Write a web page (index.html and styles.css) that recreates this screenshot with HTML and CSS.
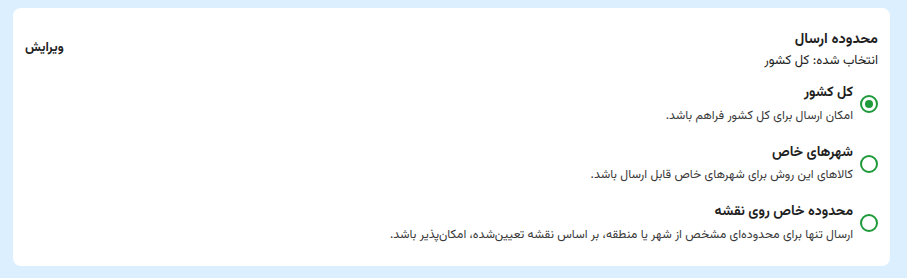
FILE: index.html
```html
<!DOCTYPE html>
<html lang="fa" dir="rtl">
<head>
<meta charset="utf-8">
<title>محدوده ارسال</title>
<link rel="stylesheet" href="styles.css">
</head>
<body>
<div class="page">
  <section class="card">
    <header class="card-head">
      <div class="head-text">
        <h2 class="title">محدوده ارسال</h2>
        <p class="subtitle">انتخاب شده: کل کشور</p>
      </div>
      <a class="edit" href="#">ویرایش</a>
    </header>
    <ul class="options">
      <li class="option">
        <span class="radio checked"></span>
        <div class="opt-text">
          <div class="opt-title">کل کشور</div>
          <div class="opt-desc">امکان ارسال برای کل کشور فراهم باشد.</div>
        </div>
      </li>
      <li class="option">
        <span class="radio"></span>
        <div class="opt-text">
          <div class="opt-title">شهرهای خاص</div>
          <div class="opt-desc">کالاهای این روش برای شهرهای خاص قابل ارسال باشد.</div>
        </div>
      </li>
      <li class="option">
        <span class="radio"></span>
        <div class="opt-text">
          <div class="opt-title">محدوده خاص روی نقشه</div>
          <div class="opt-desc">ارسال تنها برای محدوده‌ای مشخص از شهر یا منطقه، بر اساس نقشه تعیین‌شده، امکان‌پذیر باشد.</div>
        </div>
      </li>
    </ul>
  </section>
</div>
</body>
</html>
```
FILE: styles.css
```css
* { box-sizing: border-box; }
html, body { margin: 0; padding: 0; }
body {
  background: #dcefff;
  font-family: "Vazirmatn", "Noto Sans Arabic", "Noto Naskh Arabic", "DejaVu Sans", sans-serif;
  color: #222;
}
.page {
  padding: 8px 17px 12px 13px;
}
.card {
  background: #fff;
  border-radius: 8px;
  height: 258px;
  padding: 21px 12px 0 12px;
}
.card-head {
  display: flex;
  justify-content: space-between;
  align-items: flex-start;
}
.title {
  margin: 0;
  font-size: 14.5px;
  font-weight: bold;
  line-height: 22px;
  color: #1f1f1f;
}
.subtitle {
  margin: 0;
  font-size: 13px;
  line-height: 20px;
  color: #222;
}
.edit {
  margin-top: 9px;
  font-size: 13px;
  line-height: 20px;
  font-weight: bold;
  color: #222;
  text-decoration: none;
}
.options {
  list-style: none;
  margin: 11px 0 0 0;
  padding: 0;
  display: flex;
  flex-direction: column;
  gap: 15px;
}
.option {
  display: flex;
  align-items: center;
  gap: 7px;
}
.radio {
  width: 18px;
  height: 18px;
  border: 2px solid #1f9a3a;
  border-radius: 50%;
  display: flex;
  align-items: center;
  justify-content: center;
  flex: none;
}
.radio.checked::after {
  content: "";
  width: 8px;
  height: 8px;
  border-radius: 50%;
  background: #1f9a3a;
}
.opt-title {
  font-size: 14px;
  font-weight: bold;
  line-height: 22.5px;
  color: #1f1f1f;
}
.opt-desc {
  font-size: 12.3px;
  line-height: 22px;
  color: #3a3a3a;
}
```
